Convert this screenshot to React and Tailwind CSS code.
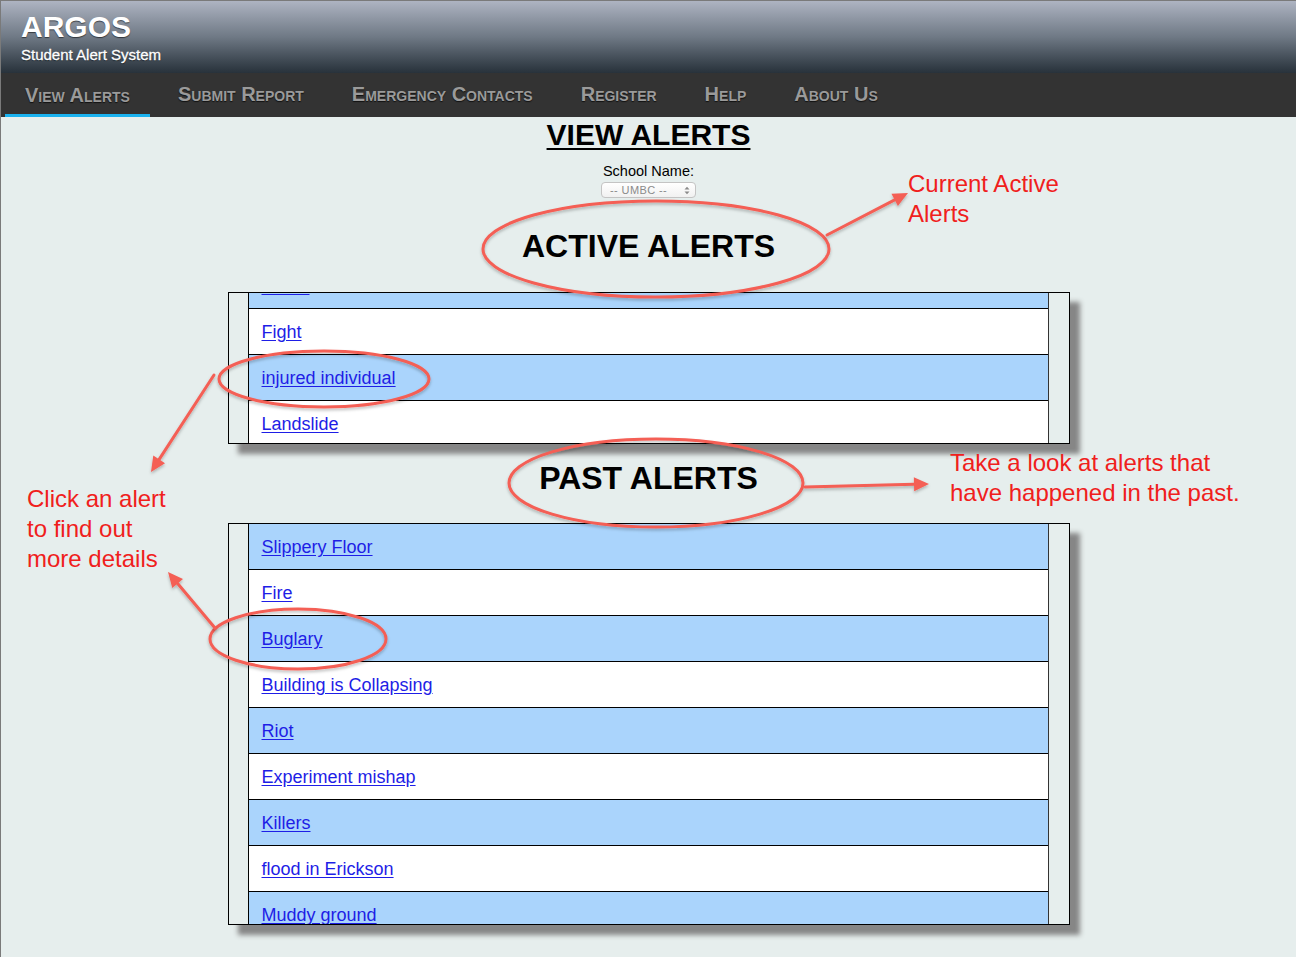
import React from "react";

const navLabels = ["View Alerts", "Submit Report", "Emergency Contacts", "Register", "Help", "About Us"];

const activeAlerts = ["Storm", "Fight", "injured individual", "Landslide"];
const pastAlerts = [
  "Slippery Floor",
  "Fire",
  "Buglary",
  "Building is Collapsing",
  "Riot",
  "Experiment mishap",
  "Killers",
  "flood in Erickson",
  "Muddy ground",
];

const AlertList = ({ alerts, height, offset }) => (
  <div
    className={`mx-auto w-[842px] border border-black bg-[#e6eeed] flex shadow-[10px_10px_5px_#868686] ${height}`}
  >
    <div className="w-[20px] border-r border-black shrink-0" />
    <div className="flex-1 overflow-hidden">
      <div className={offset}>
        {alerts.map((a, i) => (
          <div
            key={a}
            className={`h-[46px] border-b border-black flex items-center pl-[13px] pt-[2px] ${
              i % 2 === 0 ? "bg-[#aad4fc]" : "bg-white"
            }`}
          >
            <a href="#" className="text-[18px] text-[#1e1ee6] underline underline-offset-2">
              {a}
            </a>
          </div>
        ))}
      </div>
    </div>
    <div className="w-[21px] border-l border-[#333] shrink-0" />
  </div>
);

const Arrow = ({ x1, y1, x2, y2 }) => {
  const ang = Math.atan2(y2 - y1, x2 - x1);
  const len = 15;
  const w = 7;
  const bx = x2 - len * Math.cos(ang);
  const by = y2 - len * Math.sin(ang);
  const px = -Math.sin(ang) * w;
  const py = Math.cos(ang) * w;
  return (
    <g>
      <line x1={x1} y1={y1} x2={bx} y2={by} stroke="#f45e55" strokeWidth="3" strokeLinecap="round" />
      <polygon points={`${x2},${y2} ${bx + px},${by + py} ${bx - px},${by - py}`} fill="#f45e55" />
    </g>
  );
};

export default function App() {
  return (
    <div className="relative w-[1296px] h-[957px] overflow-hidden bg-[#e6eeed] border-l border-t border-[#7a7a7a] font-['Liberation_Sans',Arial,sans-serif]">
      {/* header */}
      <div className="h-[72px] bg-gradient-to-b from-[#aeb4c2] via-[#6f7985] to-[#28323b] pl-[20px] pt-[10px] text-white [text-shadow:0_1px_1px_rgba(0,0,0,0.55)]">
        <div className="text-[30px] font-bold leading-[32px]">ARGOS</div>
        <div className="text-[15px] leading-[18px] mt-[3px] [-webkit-text-stroke:0.3px_white]">Student Alert System</div>
      </div>
      <nav className="h-[44px] bg-[#333333] flex gap-2 pl-[4px]">
        {navLabels.map((label, i) => (
          <div
            key={label}
            className={`h-full px-5 flex items-center text-[20px] font-bold text-[#9a9a9a] [font-variant:small-caps] [text-shadow:0_1px_1px_#111] ${
              i === 0 ? "border-b-[3px] border-[#1ab2ef] pt-[3px]" : "pb-[3px]"
            }`}
          >
            {label}
          </div>
        ))}
      </nav>

      {/* main */}
      <main className="flex flex-col items-center">
        <h1 className="mt-[2px] text-[30px] leading-[32px] font-bold underline underline-offset-[3px] decoration-2 text-black">
          VIEW ALERTS
        </h1>
        <div className="mt-[12px] text-[14.5px] leading-[16px] text-black">School Name:</div>
        <div className="mt-[3px] w-[95px] h-[16px] rounded-[4px] border border-[#c4c4c4] bg-gradient-to-b from-white to-[#f1f1f1] flex items-center justify-between pl-[8px] pr-[5px]">
          <span className="text-[11px] tracking-[0.4px] text-[#8a8a8a] leading-none">-- UMBC --</span>
          <svg width="6" height="9" viewBox="0 0 6 9">
            <path d="M0.5 3.5 L3 0.8 L5.5 3.5 Z M0.5 5.5 L3 8.2 L5.5 5.5 Z" fill="#8a8a8a" />
          </svg>
        </div>
        <h2 className="mt-[31px] text-[32px] leading-[34px] font-bold text-black">ACTIVE ALERTS</h2>
        <div className="mt-[29px] w-full">
          <AlertList alerts={activeAlerts} height="h-[152px]" offset="-mt-[30px]" />
        </div>
        <h2 className="mt-[17px] text-[32px] leading-[34px] font-bold text-black">PAST ALERTS</h2>
        <div className="mt-[28px] w-full">
          <AlertList alerts={pastAlerts} height="h-[402px]" offset="" />
        </div>
      </main>

      {/* annotations */}
      <svg className="absolute inset-0 pointer-events-none" width="1296" height="957">
        <defs>
          <filter id="sh" x="-10%" y="-10%" width="120%" height="130%">
            <feDropShadow dx="0" dy="2" stdDeviation="1.5" floodColor="#000" floodOpacity="0.25" />
          </filter>
        </defs>
        <g fill="none" stroke="#f45e55" strokeWidth="3" filter="url(#sh)">
          <ellipse cx="655" cy="248" rx="173" ry="48" />
          <ellipse cx="655" cy="482" rx="147" ry="44" />
          <ellipse cx="323" cy="378" rx="105" ry="28" />
          <ellipse cx="297" cy="638" rx="88" ry="30" />
        </g>
        <g filter="url(#sh)">
          <Arrow x1={826} y1={234} x2={907} y2={192} />
          <Arrow x1={213} y1={374} x2={150} y2={471} />
          <Arrow x1={214} y1={627} x2={167} y2={571} />
          <Arrow x1={804} y1={486} x2={928} y2={483} />
        </g>
      </svg>
      <div className="absolute left-[907px] top-[168px] text-[24px] leading-[30px] text-[#f0201c]">
        Current Active
        <br />
        Alerts
      </div>
      <div className="absolute left-[26px] top-[483px] text-[24px] leading-[30px] text-[#f0201c]">
        Click an alert
        <br />
        to find out
        <br />
        more details
      </div>
      <div className="absolute left-[949px] top-[447px] text-[24px] leading-[30px] text-[#f0201c]">
        Take a look at alerts that
        <br />
        have happened in the past.
      </div>
    </div>
  );
}
